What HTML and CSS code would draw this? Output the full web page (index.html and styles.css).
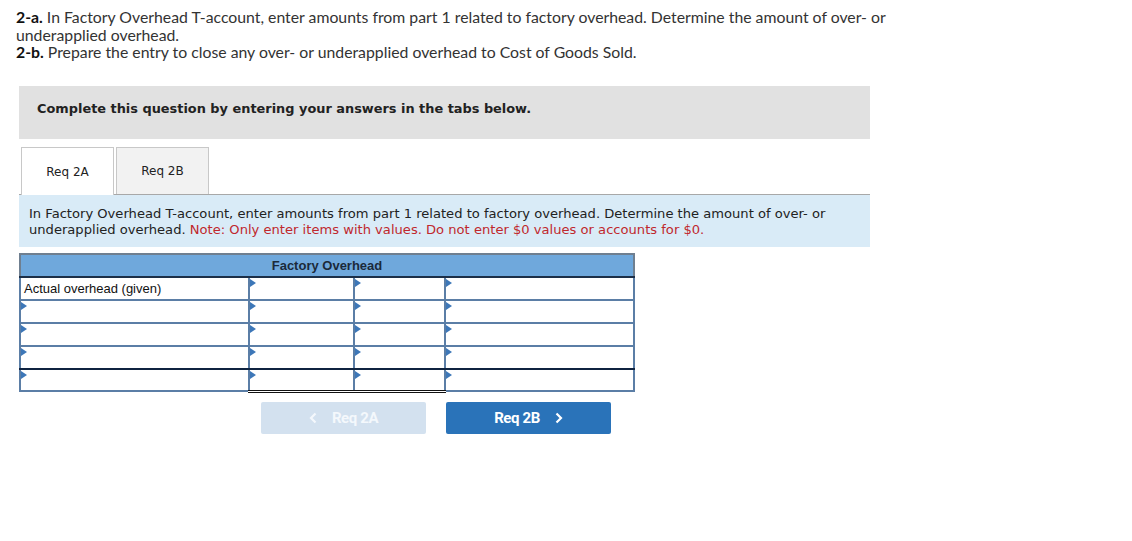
FILE: index.html
```html
<!DOCTYPE html>
<html>
<head>
<meta charset="utf-8">
<link rel="stylesheet" href="styles.css">
</head>
<body>
<div class="intro">
  <p><b>2-a.</b> In Factory Overhead T-account, enter amounts from part 1 related to factory overhead. Determine the amount of over- or underapplied overhead.</p>
  <p><b>2-b.</b> Prepare the entry to close any over- or underapplied overhead to Cost of Goods Sold.</p>
</div>
<div class="wrap">
  <div class="banner">Complete this question by entering your answers in the tabs below.</div>
  <div class="tabs">
    <div class="tab active">Req 2A</div>
    <div class="tab">Req 2B</div>
  </div>
  <div class="instr">In Factory Overhead T-account, enter amounts from part 1 related to factory overhead. Determine the amount of over- or underapplied overhead. <span class="note">Note: Only enter items with values. Do not enter $0 values or accounts for $0.</span></div>
  <table class="tacct">
    <colgroup><col class="c1"><col class="c2"><col class="c3"><col class="c4"></colgroup>
    <tr class="head"><td colspan="4">Factory Overhead</td></tr>
    <tr><td class="label">Actual overhead (given)</td><td class="dd amt"></td><td class="dd amt tl"></td><td class="dd"></td></tr>
    <tr><td class="dd"></td><td class="dd amt"></td><td class="dd amt tl"></td><td class="dd"></td></tr>
    <tr><td class="dd"></td><td class="dd amt"></td><td class="dd amt tl"></td><td class="dd"></td></tr>
    <tr class="sub"><td class="dd"></td><td class="dd amt"></td><td class="dd amt tl"></td><td class="dd"></td></tr>
    <tr class="tot"><td class="dd"></td><td class="dd amt dbl"></td><td class="dd amt tl dbl"></td><td class="dd"></td></tr>
  </table>
  <div class="nav">
    <button class="btn prev"><svg class="chev" width="8" height="12" viewBox="0 0 8 12"><path d="M6.5 1.5 L2 6 L6.5 10.5" fill="none" stroke="currentColor" stroke-width="2.2"/></svg><span>Req 2A</span></button>
    <button class="btn next"><span>Req 2B</span><svg class="chev" width="8" height="12" viewBox="0 0 8 12"><path d="M1.5 1.5 L6 6 L1.5 10.5" fill="none" stroke="currentColor" stroke-width="2.2"/></svg></button>
  </div>
</div>
</body>
</html>
```

FILE: styles.css
```css
body {
  margin: 0;
  background: #fff;
  color: #222;
}
.intro {
  padding: 8px 16px 0 16px;
  font-family: "Lato", "Liberation Sans", sans-serif;
  font-size: 15.8px;
  line-height: 17.5px;
  color: #333;
  width: 900px;
}
.intro p { margin: 0; }
.intro b { color: #111; }
.wrap {
  margin: 25px 0 0 19px;
  width: 851px;
}
.banner {
  background: #e1e1e1;
  height: 53px;
  box-sizing: border-box;
  padding: 15px 0 0 18px;
  font-family: "DejaVu Sans", Verdana, sans-serif;
  font-weight: bold;
  font-size: 12.9px;
  line-height: 16px;
  color: #222;
}
.tabs {
  margin-top: 8px;
  display: flex;
  gap: 2px;
  padding-left: 2px;
  border-bottom: 1px solid #a8a8a8;
  height: 47px;
}
.tab {
  width: 93px;
  height: 47px;
  padding-top: 1px;
  border: 1px solid #c8c8c8;
  border-bottom: none;
  background: #f2f2f2;
  display: flex;
  align-items: center;
  justify-content: center;
  font-family: "DejaVu Sans", Verdana, sans-serif;
  font-size: 12px;
  color: #222;
  box-sizing: border-box;
}
.tab.active {
  background: #fff;
  height: 48px;
  margin-bottom: -1px;
}
.instr {
  background: #d9ebf7;
  padding: 11px 10px 9px 10px;
  font-family: "DejaVu Sans", Verdana, sans-serif;
  font-size: 13.1px;
  line-height: 16px;
  color: #222;
}
.note { color: #c0282d; }
.tacct {
  margin-top: 6px;
  border-collapse: collapse;
  font-family: "Liberation Sans", Arial, sans-serif;
  font-size: 13px;
}
.c1 { width: 229px; }
.c2 { width: 105px; }
.c3 { width: 91px; }
.c4 { width: 189px; }
.tacct td {
  border: 2px solid #5b7ea6;
  height: 21px;
  padding: 0 3px;
  background: #fff;
  position: relative;
}
.tacct tr.head td {
  background: #6fa8dc;
  text-align: center;
  font-weight: bold;
  color: #1b2a3a;
  border: 2px solid #6f7f90;
  border-bottom: 2px solid #1c2f48;
  height: 21px;
}
.tacct tr.tot td { height: 20px; }
.tacct td.label { color: #111; }
.tacct td.tl { border-left: 2px solid #1b3555; }
.tacct tr.sub td { border-bottom: 2px solid #0f2340; }
.tacct td.dbl { border-bottom: 3px double #111; }
.tacct td.dd::before {
  content: "";
  position: absolute;
  left: 0;
  top: 1px;
  border-top: 4px solid transparent;
  border-bottom: 4px solid transparent;
  border-left: 6px solid #3d77b8;
}
.nav {
  margin-top: 9px;
  display: flex;
  gap: 20px;
  padding-left: 242px;
}
.btn {
  width: 165px;
  height: 32px;
  border: none;
  border-radius: 2px;
  font-family: "Roboto", "Liberation Sans", sans-serif;
  font-weight: bold;
  font-size: 15px;
  letter-spacing: -0.4px;
  display: flex;
  align-items: center;
  justify-content: center;
  gap: 15px;
  padding: 0;
}
.prev { background: #d3e1ef; color: #f4f8fc; }
.next { background: #2a73b9; color: #fff; }
```
